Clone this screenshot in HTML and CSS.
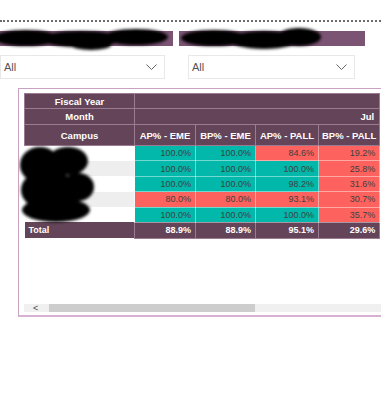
FILE: index.html
```html
<!DOCTYPE html>
<html lang="en">
<head>
    <meta charset="UTF-8">
    <title>Report</title>
    <link rel="stylesheet" href="styles.css">
</head>
<body>
    <div class="page">
        <div class="dots"></div>

        <div class="slicers">
            <div class="slicer slicer-one">
                <div class="slicer-title">
                    <svg class="scribble" width="180" height="30" viewBox="0 0 180 30">
                        <defs><filter id="b1"><feGaussianBlur stdDeviation="1.6"/></filter></defs>
                        <g filter="url(#b1)" fill="#000">
                            <ellipse cx="30" cy="13" rx="32" ry="8"/>
                            <ellipse cx="85" cy="14" rx="40" ry="8"/>
                            <ellipse cx="140" cy="12" rx="32" ry="8"/>
                            <ellipse cx="95" cy="20" rx="20" ry="5"/>
                        </g>
                    </svg>
                </div>
                <div class="dropdown">
                    <span>All</span>
                    <svg width="11" height="6" viewBox="0 0 11 6"><path d="M0.5 0.5 L5.5 5.5 L10.5 0.5" fill="none" stroke="#666" stroke-width="1"/></svg>
                </div>
            </div>
            <div class="slicer slicer-two">
                <div class="slicer-title">
                    <svg class="scribble" width="150" height="30" viewBox="0 0 150 30">
                        <defs><filter id="b2"><feGaussianBlur stdDeviation="1.6"/></filter></defs>
                        <g filter="url(#b2)" fill="#000">
                            <ellipse cx="35" cy="13" rx="33" ry="8"/>
                            <ellipse cx="85" cy="15" rx="35" ry="9"/>
                            <ellipse cx="120" cy="12" rx="22" ry="9"/>
                        </g>
                    </svg>
                </div>
                <div class="dropdown">
                    <span>All</span>
                    <svg width="11" height="6" viewBox="0 0 11 6"><path d="M0.5 0.5 L5.5 5.5 L10.5 0.5" fill="none" stroke="#666" stroke-width="1"/></svg>
                </div>
            </div>
        </div>

        <div class="visual">
            <div class="matrix-wrap">
                <table class="matrix">
                    <tr class="head h1">
                        <th class="rowhead">Fiscal Year</th>
                        <th colspan="4" class="span"></th>
                    </tr>
                    <tr class="head h2">
                        <th class="rowhead">Month</th>
                        <th colspan="4" class="span right">Jul</th>
                    </tr>
                    <tr class="head h3">
                        <th class="rowhead">Campus</th>
                        <th class="c1">AP% - EME</th>
                        <th class="c2">BP% - EME</th>
                        <th class="c3">AP% - PALL</th>
                        <th class="c4">BP% - PALL</th>
                    </tr>
                    <tr>
                        <td class="name"></td>
                        <td class="ok">100.0%</td><td class="ok">100.0%</td><td class="bad">84.6%</td><td class="bad">19.2%</td>
                    </tr>
                    <tr class="alt">
                        <td class="name"></td>
                        <td class="ok">100.0%</td><td class="ok">100.0%</td><td class="ok">100.0%</td><td class="bad">25.8%</td>
                    </tr>
                    <tr>
                        <td class="name"></td>
                        <td class="ok">100.0%</td><td class="ok">100.0%</td><td class="ok">98.2%</td><td class="bad">31.6%</td>
                    </tr>
                    <tr class="alt">
                        <td class="name"></td>
                        <td class="bad">80.0%</td><td class="bad">80.0%</td><td class="bad">93.1%</td><td class="bad">30.7%</td>
                    </tr>
                    <tr>
                        <td class="name"></td>
                        <td class="ok">100.0%</td><td class="ok">100.0%</td><td class="ok">100.0%</td><td class="bad">35.7%</td>
                    </tr>
                    <tr class="total">
                        <td class="name">Total</td>
                        <td>88.9%</td><td>88.9%</td><td>95.1%</td><td>29.6%</td>
                    </tr>
                </table>
                <svg class="redact" width="84" height="80" viewBox="0 0 84 80">
                    <defs><filter id="b3"><feGaussianBlur stdDeviation="1.5"/></filter></defs>
                    <g filter="url(#b3)" fill="#000">
                        <ellipse cx="22" cy="20" rx="20" ry="18"/>
                        <ellipse cx="50" cy="16" rx="20" ry="14"/>
                        <ellipse cx="30" cy="45" rx="27" ry="20"/>
                        <ellipse cx="60" cy="42" rx="16" ry="14"/>
                        <ellipse cx="38" cy="65" rx="34" ry="12"/>
                    </g>
                </svg>
            </div>

            <div class="scrollbar">
                <span class="arrow">&lt;</span>
                <div class="thumb"></div>
            </div>
        </div>
    </div>
</body>
</html>
```

FILE: styles.css
```css
* {
    margin: 0;
    padding: 0;
    box-sizing: border-box;
}

body {
    background-color: white;
    font-family: "Liberation Sans", Arial, sans-serif;
    overflow: hidden;
}

.page {
    width: 381px;
    height: 414px;
    padding-top: 20px;
    overflow: hidden;
}

.dots {
    border-top: 2px dotted #6b6b6b;
}

.slicers {
    display: flex;
    margin-top: 9px;
}

.slicer-one {
    width: 173px;
}

.slicer-two {
    width: 186px;
    margin-left: 6px;
}

.slicer-title {
    height: 15px;
    background-color: #7b5373;
    position: relative;
}

.scribble {
    position: absolute;
    left: -4px;
    top: -6px;
}

.slicer-two .scribble {
    left: 0;
}

.dropdown {
    height: 24px;
    margin-top: 9px;
    border: 1px solid #e8e8e8;
    display: flex;
    align-items: center;
    justify-content: space-between;
    padding: 0 7px 0 3px;
    font-size: 11px;
    color: #555;
}

.slicer-one .dropdown {
    width: 165px;
}

.slicer-two .dropdown {
    width: 167px;
    margin-left: 9px;
}

.visual {
    margin-top: 9px;
    margin-left: 18px;
    width: 363px;
    height: 229px;
    border: 1px solid #c9a2c3;
    border-right: none;
    border-bottom: 2px solid #d7b0d2;
    padding: 4px 0 0 5px;
    overflow: hidden;
}

.matrix-wrap {
    position: relative;
    height: 211px;
}

.matrix {
    border-collapse: collapse;
    font-size: 9px;
}

.matrix th,
.matrix td {
    padding: 0 3px;
    white-space: nowrap;
}

.head th {
    background-color: #634459;
    color: white;
    font-size: 9.5px;
    font-weight: bold;
    text-align: center;
    border: 1px solid #9a7b92;
}

.head .right {
    text-align: right;
    padding-right: 5px;
}

.h1 th { height: 15px; }
.h2 th { height: 16px; }
.h3 th { height: 21px; }

.rowhead { width: 110px; }
.c1 { width: 61px; }
.c2 { width: 60px; }
.c3 { width: 63px; }
.c4 { width: 61px; }

.matrix td {
    height: 15.4px;
    text-align: right;
    color: #404040;
    border: 1px solid rgba(255, 255, 255, 0.45);
    padding-right: 4px;
}

.matrix td.name {
    background-color: white;
    border: none;
}

.alt td.name {
    background-color: #eeeeee;
}

.matrix td.ok {
    background-color: #01b8aa;
}

.matrix td.bad {
    background-color: #fd625e;
}

.total td {
    height: 16px;
    background-color: #634459;
    color: white;
    font-weight: bold;
    border: 1px solid #9a7b92;
}

.total td.name {
    background-color: #634459;
    text-align: left;
    padding-left: 4px;
    border: none;
}

.redact {
    position: absolute;
    left: -6px;
    top: 52px;
}

.scrollbar {
    display: flex;
    align-items: center;
    width: 100%;
    height: 8px;
    background-color: #f0f0f0;
}

.arrow {
    width: 25px;
    font-size: 9px;
    color: #444;
    padding-left: 9px;
    line-height: 8px;
}

.thumb {
    width: 206px;
    height: 8px;
    background-color: #cdcdcd;
}
```
